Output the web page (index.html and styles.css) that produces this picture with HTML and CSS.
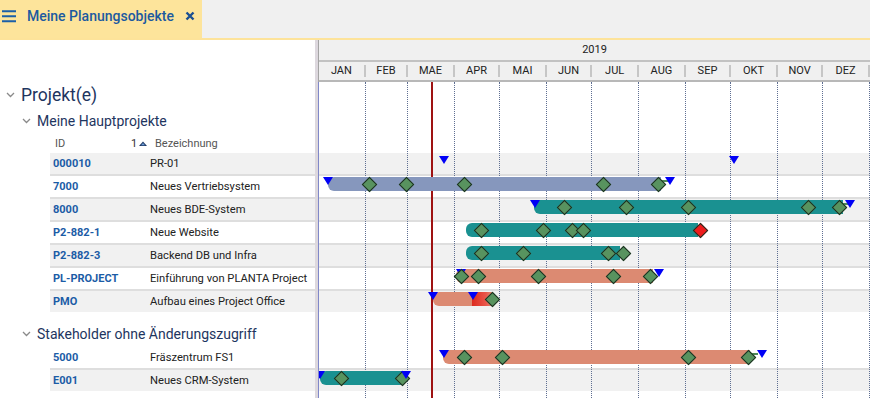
FILE: index.html
```html
<!DOCTYPE html>
<html>
<head>
  <meta charset="utf-8">
  <link rel="stylesheet" href="styles.css">
</head>
<body>
  <div class="topbar">
    <div class="tab">
      <svg class="menu-icon" width="17" height="14" viewBox="0 0 17 14">
        <path d="M1 2.3H15M1 7.3H15M1 12.3H15" stroke="#1b5fa8" stroke-width="2" fill="none"/>
      </svg>
      <span class="tab-title">Meine Planungsobjekte</span>
      <svg class="close-icon" width="10" height="10" viewBox="0 0 10 10">
        <path d="M1.5 1.5L8.5 8.5M8.5 1.5L1.5 8.5" stroke="#1b4f92" stroke-width="2.4" fill="none"/>
      </svg>
    </div>
  </div>

  <div class="main">
    <!-- tree / table side -->
    <div class="tree">
      <div class="group-title">
        <svg class="chev" width="9" height="6" viewBox="0 0 9 6"><path d="M1 1L4.5 4.5L8 1" stroke="#8a8a8a" stroke-width="1.3" fill="none"/></svg>
        Projekt(e)
      </div>
      <div class="subgroup">
        <svg class="chev" width="9" height="6" viewBox="0 0 9 6"><path d="M1 1L4.5 4.5L8 1" stroke="#8a8a8a" stroke-width="1.3" fill="none"/></svg>
        Meine Hauptprojekte
      </div>
      <div class="colhead">
        <span class="h-id">ID</span>
        <span class="h-sort">1<svg width="10" height="7" viewBox="0 0 10 7"><path d="M1 6L5 1.5L9 6Z" fill="#1e3a66"/><path d="M3 5.2L5 3L7 5.2Z" fill="#6f9fd8"/></svg></span>
        <span class="h-name">Bezeichnung</span>
      </div>
      <div class="rows">
        <div class="row alt"><span class="c-id">000010</span><span class="c-name">PR-01</span></div>
        <div class="row"><span class="c-id">7000</span><span class="c-name">Neues Vertriebsystem</span></div>
        <div class="row alt"><span class="c-id">8000</span><span class="c-name">Neues BDE-System</span></div>
        <div class="row"><span class="c-id">P2-882-1</span><span class="c-name">Neue Website</span></div>
        <div class="row alt"><span class="c-id">P2-882-3</span><span class="c-name">Backend DB und Infra</span></div>
        <div class="row"><span class="c-id">PL-PROJECT</span><span class="c-name">Einführung von PLANTA Project</span></div>
        <div class="row alt"><span class="c-id">PMO</span><span class="c-name">Aufbau eines Project Office</span></div>
      </div>
      <div class="subgroup second">
        <svg class="chev" width="9" height="6" viewBox="0 0 9 6"><path d="M1 1L4.5 4.5L8 1" stroke="#8a8a8a" stroke-width="1.3" fill="none"/></svg>
        Stakeholder ohne Änderungszugriff
      </div>
      <div class="rows">
        <div class="row"><span class="c-id">5000</span><span class="c-name">Fräszentrum FS1</span></div>
        <div class="row alt"><span class="c-id">E001</span><span class="c-name">Neues CRM-System</span></div>
      </div>
    </div>

    <div class="splitter"></div>

    <!-- gantt side -->
    <div class="gantt">
      <div class="g-head">
        <div class="g-year">2019</div>
        <div class="g-months">
          <div>JAN</div><div>FEB</div><div>MAE</div><div>APR</div><div>MAI</div><div>JUN</div>
          <div>JUL</div><div>AUG</div><div>SEP</div><div>OKT</div><div>NOV</div><div>DEZ</div>
        </div>
      </div>
      <div class="g-body">
        <div class="g-spacer"></div>
        <div class="rows">
          <div class="row alt">
            <span class="tri" style="left:124.5px"></span>
            <span class="tri" style="left:414.5px"></span>
          </div>
          <div class="row">
            <span class="bar slate" style="left:9px;width:333px"></span>
            <span class="tri" style="left:9px"></span>
            <span class="dia" style="left:50px"></span>
            <span class="dia" style="left:87px"></span>
            <span class="dia" style="left:145px"></span>
            <span class="dia" style="left:284px"></span>
            <span class="link" style="left:343px"></span>
            <span class="dia" style="left:339px"></span>
            <span class="tri" style="left:351px"></span>
          </div>
          <div class="row alt">
            <span class="bar teal" style="left:215px;width:309px"></span>
            <span class="tri" style="left:215.5px"></span>
            <span class="dia" style="left:245px"></span>
            <span class="dia" style="left:307px"></span>
            <span class="dia" style="left:369px"></span>
            <span class="dia" style="left:489px"></span>
            <span class="link" style="left:524px"></span>
            <span class="dia" style="left:520px"></span>
            <span class="tri" style="left:531px"></span>
          </div>
          <div class="row">
            <span class="bar teal" style="left:147px;width:232px"></span>
            <span class="dia" style="left:162px"></span>
            <span class="dia" style="left:224px"></span>
            <span class="dia" style="left:253px"></span>
            <span class="dia" style="left:264px"></span>
            <span class="dia late" style="left:381px"></span>
          </div>
          <div class="row alt">
            <span class="bar teal" style="left:147px;width:154px"></span>
            <span class="dia" style="left:162px"></span>
            <span class="dia" style="left:204px"></span>
            <span class="dia" style="left:289px"></span>
            <span class="dia" style="left:304px"></span>
          </div>
          <div class="row">
            <span class="bar salmon" style="left:137px;width:197px"></span>
            <span class="tri" style="left:142px"></span>
            <span class="dia" style="left:142px"></span>
            <span class="dia" style="left:159px"></span>
            <span class="dia" style="left:219px"></span>
            <span class="dia" style="left:294px"></span>
            <span class="dia" style="left:331px"></span>
            <span class="tri" style="left:340px"></span>
          </div>
          <div class="row alt">
            <span class="bar salmon" style="left:114px;width:59px"></span>
            <span class="bar overdue" style="left:153px;width:20px"></span>
            <span class="tri" style="left:113.5px"></span>
            <span class="tri" style="left:153.5px"></span>
            <span class="dia" style="left:173px"></span>
          </div>
        </div>
        <div class="g-spacer mid"></div>
        <div class="rows">
          <div class="row">
            <span class="bar salmon" style="left:124px;width:307px"></span>
            <span class="tri" style="left:124.5px"></span>
            <span class="dia" style="left:145px"></span>
            <span class="dia" style="left:183px"></span>
            <span class="dia" style="left:369px"></span>
            <span class="link" style="left:433px"></span>
            <span class="dia" style="left:429px"></span>
            <span class="tri" style="left:443px"></span>
          </div>
          <div class="row alt">
            <span class="bar teal" style="left:1px;width:84px"></span>
            <span class="tri" style="left:1px"></span>
            <span class="dia" style="left:22px"></span>
            <span class="dia" style="left:83px"></span>
            <span class="tri" style="left:87px"></span>
          </div>
        </div>

        <div class="g-grid">
          <div></div><div></div><div></div><div></div><div></div><div></div>
          <div></div><div></div><div></div><div></div><div></div><div></div>
          <span class="today"></span>
        </div>
      </div>
    </div>
  </div>
</body>
</html>
```

FILE: styles.css
```css
* {
  box-sizing: border-box;
}

body {
  width: 870px;
  height: 398px;
  margin: 0;
  overflow: hidden;
  font-family: Roboto, 'Noto Sans', sans-serif;
  background: white;
  color: #222;
}

/* top tab bar */
.topbar {
  height: 40px;
  background: #f0f0f0;
  border-bottom: 2px solid #fde39a;
}

.tab {
  width: 202px;
  height: 38px;
  padding: 0 0 7px 1px;
  display: flex;
  align-items: center;
  background: #fde49b;
}

.menu-icon {
  flex: none;
}

.tab-title {
  margin-left: 9px;
  font-size: 14px;
  font-weight: 500;
  color: #1c5aa0;
}

.close-icon {
  margin-left: 11px;
}

.main {
  display: flex;
  height: 358px;
}

/* tree side */
.tree {
  width: 315px;
  flex: none;
}

.group-title {
  display: flex;
  align-items: center;
  height: 22px;
  margin-top: 44px;
  padding-left: 6px;
  font-size: 17.5px;
  color: #1e3560;
}

.subgroup {
  display: flex;
  align-items: center;
  height: 24px;
  margin-top: 3px;
  padding-left: 22px;
  font-size: 14px;
  color: #1e3560;
}

.subgroup.second {
  height: 26px;
  margin-top: 9px;
}

.chev {
  margin-right: 6px;
  flex: none;
}

.colhead {
  display: flex;
  align-items: center;
  height: 20px;
  margin-left: 50px;
  font-size: 11px;
  color: #555;
}

.h-id {
  width: 81px;
  padding-left: 5px;
}

.h-sort {
  width: 24px;
  display: flex;
  align-items: center;
  color: #333;
}

.h-sort svg {
  margin-left: 1px;
}

.tree .rows {
  margin-left: 50px;
}

.row {
  position: relative;
  height: 21px;
  background: white;
}

.row + .row {
  height: 23px;
  border-top: 2px solid #dedede;
}

.row.alt {
  background: #f1f1f1;
}

.tree .row {
  display: flex;
  align-items: center;
  font-size: 11px;
}

.c-id {
  width: 100px;
  padding-left: 3px;
  font-weight: 700;
  color: #1b5ca6;
}

.c-name {
  font-size: 11.2px;
  color: #222;
}

.splitter {
  width: 3px;
  flex: none;
  background: #ddd8de;
}

/* gantt side */
.gantt {
  flex: 1;
  display: flex;
  flex-direction: column;
  min-width: 0;
}

.g-head {
  background: #f0f0f0;
  border-left: 1px solid #a4a4a4;
  font-size: 11px;
  color: #222;
}

.g-year {
  height: 22px;
  line-height: 20px;
  text-align: center;
  border-bottom: 2px solid #c2c2c2;
}

.g-months,
.g-grid {
  display: grid;
  grid-template-columns: 31fr 28fr 31fr 30fr 31fr 30fr 31fr 31fr 30fr 31fr 30fr 31fr;
}

.g-months {
  height: 20px;
  padding: 3px 0;
  border-bottom: 2px solid #b8b8b8;
}

.g-months div {
  line-height: 12px;
  text-align: center;
  border-right: 2px solid #c6c6c6;
}

.g-body {
  position: relative;
  flex: 1;
  overflow: hidden;
  border-left: 1px solid #8088c8;
}

.g-spacer {
  height: 71px;
}

.g-spacer.mid {
  height: 35px;
}

.g-grid {
  position: absolute;
  top: 0;
  left: 0;
  right: 0;
  bottom: 0;
  z-index: 0;
}

.g-grid div {
  border-right: 1px dotted #5f6f92;
}

.today {
  position: absolute;
  top: 0;
  bottom: 0;
  left: 112px;
  width: 2px;
  background: #9e1212;
}

.bar,
.tri,
.dia,
.link {
  position: absolute;
  z-index: 1;
}

.row + .row .bar,
.row + .row .tri,
.row + .row .dia,
.row + .row .link {
  margin-top: -2px;
}

.bar {
  top: 3px;
  height: 14px;
  border-radius: 6px 0 0 6px;
}

.bar.slate {
  background: #8697bd;
}

.bar.teal {
  background: #1a9191;
}

.bar.salmon {
  background: #dc8a72;
}

.bar.overdue {
  border-radius: 0;
  background: linear-gradient(to right, #dd2a1e, #e9564a 70%, #dc8a72);
}

.tri {
  top: 3px;
  width: 0;
  height: 0;
  margin-left: -5px;
  border-left: 5px solid transparent;
  border-right: 5px solid transparent;
  border-top: 8px solid #0000f6;
}

.dia {
  top: 5px;
  width: 11px;
  height: 11px;
  margin-left: -5.5px;
  background: #58935f;
  border: 1px solid #1b2f20;
  transform: rotate(45deg);
}

.dia.late {
  background: #ee1c1c;
}

.link {
  top: 6px;
  width: 6px;
  height: 2px;
  background: #4f8a5a;
}
```
